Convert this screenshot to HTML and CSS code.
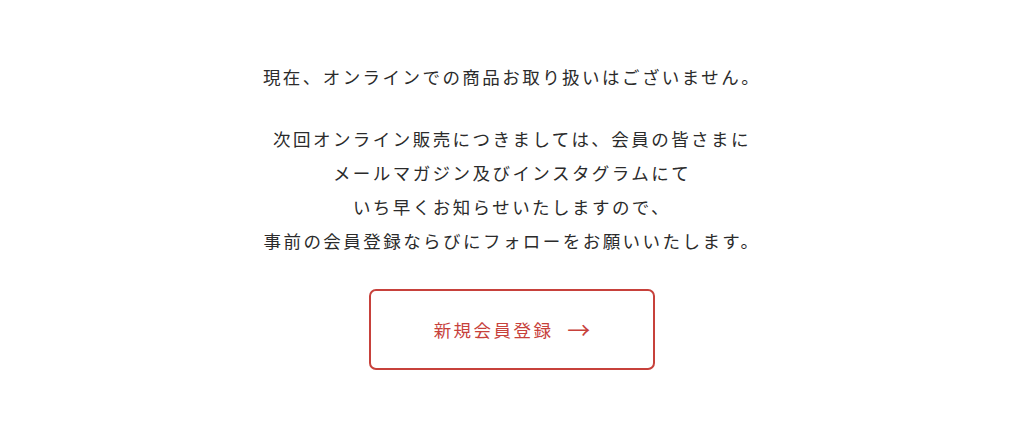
FILE: index.html
```html
<!DOCTYPE html>
<html lang="ja">
<head>
  <meta charset="UTF-8">
  <title>オンライン販売について</title>
  <link rel="stylesheet" href="styles.css">
</head>
<body>

  <main class="notice">
    <p class="notice-lead">現在、オンラインでの商品お取り扱いはございません。</p>

    <p class="notice-body">
      次回オンライン販売につきましては、会員の皆さまに<br>
      メールマガジン及びインスタグラムにて<br>
      いち早くお知らせいたしますので、<br>
      事前の会員登録ならびにフォローをお願いいたします。
    </p>

    <a class="register-btn" href="#">
      <span>新規会員登録</span>
      <span class="arrow">→</span>
    </a>
  </main>

</body>
</html>
```

FILE: styles.css
```css
body {
  margin: 0;
  background: #fff;
  color: #2b2b2b;
  font-family: "Noto Sans CJK JP", "Noto Sans", sans-serif;
}

.notice {
  display: flex;
  flex-direction: column;
  align-items: center;
  padding-top: 60px;
  text-align: center;
}

.notice p {
  margin: 0;
  font-size: 17.5px;
  line-height: 34px;
  letter-spacing: 0.14em;
}

.notice-body {
  margin-top: 28px !important;
}

/* 赤枠の登録ボタン */
.register-btn {
  display: flex;
  align-items: center;
  justify-content: center;
  gap: 14px;
  box-sizing: border-box;
  width: 286px;
  height: 81px;
  margin-top: 31px;
  border: 2px solid #c7413b;
  border-radius: 7px;
  color: #c7413b;
  font-size: 17.5px;
  letter-spacing: 0.14em;
  text-decoration: none;
}

.register-btn .arrow {
  font-size: 23px;
  letter-spacing: 0;
  line-height: 1;
}
```
